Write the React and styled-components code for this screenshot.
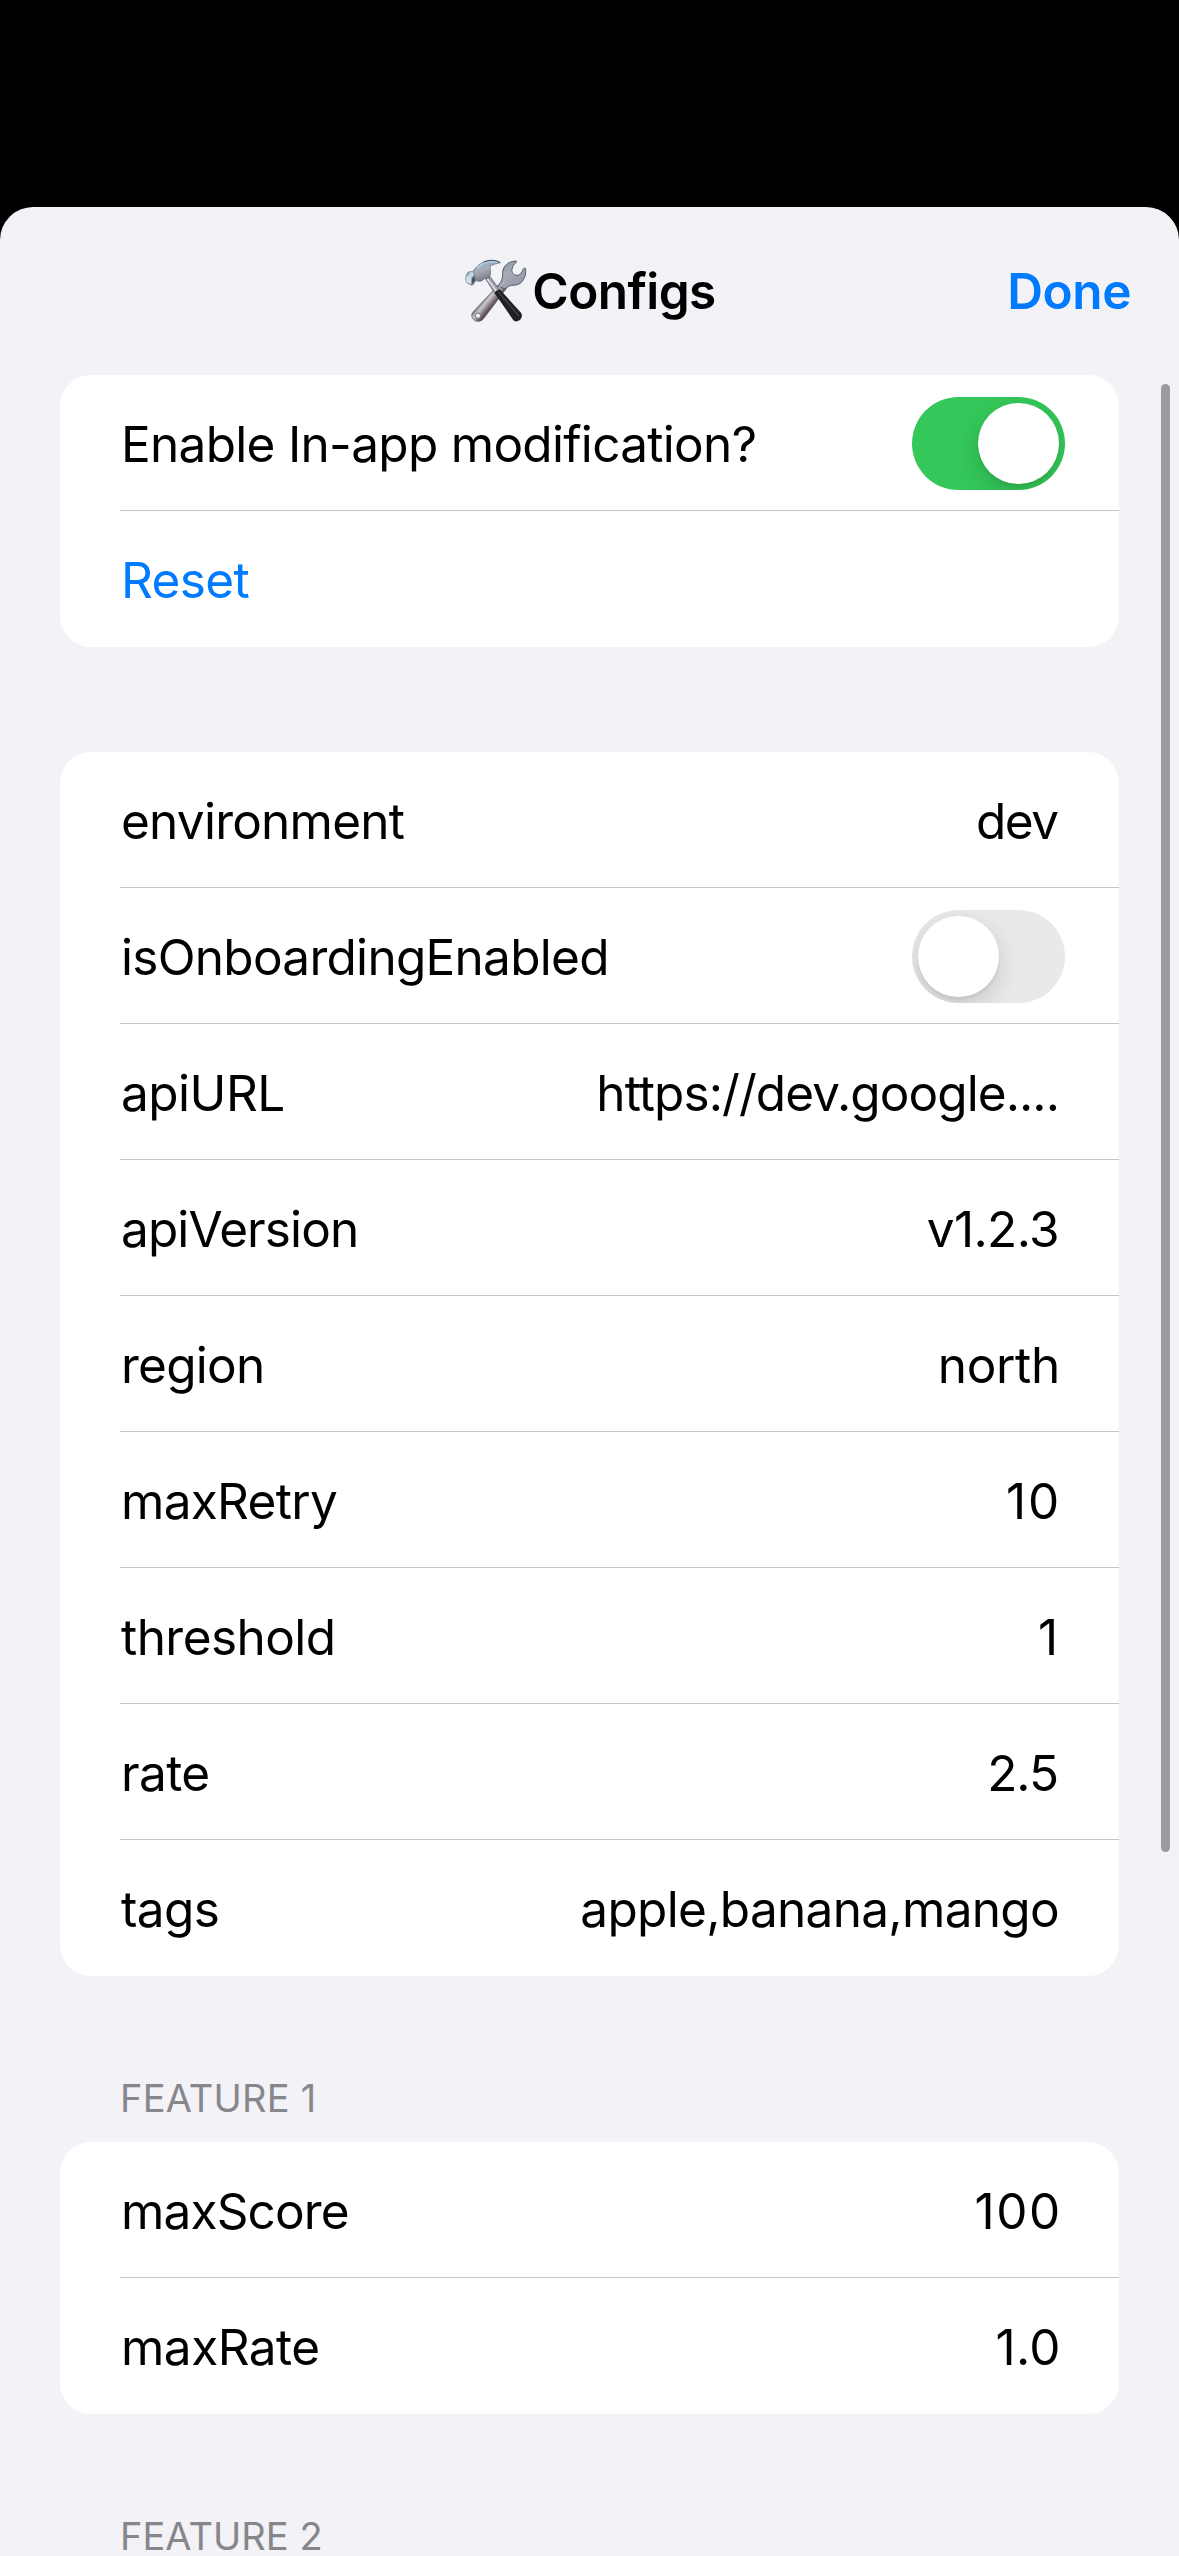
import React, { useState } from "react";
import styled, { createGlobalStyle } from "styled-components";

const GlobalStyle = createGlobalStyle`
  body {
    margin: 0;
    background: #000;
    overflow: hidden;
  }
`;

const Screen = styled.div`
  box-sizing: border-box;
  width: 1179px;
  height: 2556px;
  padding-top: 207px;
  overflow: hidden;
  background: #000;
  color: #000;
  font-family: Inter, "Liberation Sans", sans-serif;
  font-size: 49.5px;
  line-height: 60px;
  letter-spacing: -0.65px;
`;

const Sheet = styled.main`
  position: relative;
  display: flex;
  flex-direction: column;
  height: 2349px;
  overflow: hidden;
  border-radius: 33px 33px 0 0;
  background: #f2f2f7;
`;

const NavBar = styled.header`
  display: grid;
  grid-template-columns: 1fr auto 1fr;
  align-items: center;
  flex: none;
  height: 168px;
  padding: 0 48px;
`;

const Title = styled.h1`
  grid-column: 2;
  display: flex;
  align-items: center;
  margin: 0;
  font-size: inherit;
  font-weight: 600;
  letter-spacing: -0.6px;
`;

const ToolsArt = styled.svg`
  width: 69px;
  height: 64px;
  margin-bottom: 2px;
`;

const PlainButton = styled.button`
  padding: 0;
  border: 0;
  background: none;
  color: #007aff;
  font: inherit;
  letter-spacing: ${(p) => p.$track ?? -0.65}px;
`;

const DoneButton = styled(PlainButton)`
  justify-self: end;
  font-weight: 600;
`;

const Section = styled.section`
  flex: none;
  padding: 0 60px;
`;

const Gap = styled.div`
  flex: none;
  height: 105px;
`;

const SectionTitle = styled.h2`
  box-sizing: border-box;
  display: flex;
  align-items: flex-end;
  height: 166px;
  margin: 0;
  padding: 0 60px 27px;
  color: #86868b;
  font-size: 38px;
  font-weight: 400;
  line-height: 34px;
  letter-spacing: ${(p) => p.$track}px;
`;

const Card = styled.div`
  overflow: hidden;
  border-radius: 31px;
  background: #fff;
`;

const Row = styled.div`
  box-sizing: border-box;
  display: flex;
  align-items: center;
  justify-content: space-between;
  height: 136px;
  margin-left: 60px;
  padding: 2px 60px 0 1px;
  border-bottom: 1px solid #c6c6c8;
  white-space: nowrap;

  &:last-child {
    border-bottom-color: transparent;
  }
`;

const Label = styled.span`
  letter-spacing: ${(p) => p.$track ?? -0.65}px;
`;

const Value = styled(Label)`
  margin-right: ${(p) => p.$inset ?? 0}px;
`;

const Switch = styled.button`
  box-sizing: border-box;
  display: flex;
  justify-content: ${(p) => (p.$on ? "flex-end" : "flex-start")};
  width: 153px;
  height: 93px;
  margin-right: -6px;
  padding: 6px;
  overflow: hidden;
  border: 0;
  border-radius: 47px;
  background: ${(p) => (p.$on ? "#34c759" : "#e9e9eb")};
`;

const Knob = styled.span`
  width: 81px;
  height: 81px;
  border-radius: 50%;
  background: #fff;
  box-shadow: 0 9px 24px rgba(0, 0, 0, 0.15), 0 3px 3px rgba(0, 0, 0, 0.05);
`;

const ScrollThumb = styled.div`
  position: absolute;
  top: 177px;
  right: 9px;
  width: 9px;
  height: 1468px;
  border-radius: 5px;
  background: #9c9ba1;
`;

function Tools() {
  return (
    <ToolsArt viewBox="12 24 207 192" aria-hidden="true">
      <defs>
        <linearGradient id="steel" x1="0" y1="0" x2="0.4" y2="1">
          <stop offset="0" stopColor="#93a9c0" />
          <stop offset="0.5" stopColor="#a9adb8" />
          <stop offset="1" stopColor="#747680" />
        </linearGradient>
        <linearGradient id="jaw" x1="0" y1="0" x2="0.7" y2="1">
          <stop offset="0" stopColor="#7e93a6" />
          <stop offset="0.45" stopColor="#a7abb7" />
          <stop offset="1" stopColor="#9497a3" />
        </linearGradient>
        <linearGradient id="handle" gradientUnits="userSpaceOnUse" x1="78" y1="146" x2="101" y2="165">
          <stop offset="0" stopColor="#7c7b86" />
          <stop offset="0.28" stopColor="#c9cbd2" />
          <stop offset="0.62" stopColor="#9f8e96" />
          <stop offset="1" stopColor="#584f59" />
        </linearGradient>
        <linearGradient id="face" x1="0" y1="0" x2="1" y2="1">
          <stop offset="0" stopColor="#5f7990" />
          <stop offset="0.4" stopColor="#c9e2ee" />
          <stop offset="1" stopColor="#59616c" />
        </linearGradient>
      </defs>
      <path
        d="M117 106 L41 187 C34 197 40 212 54 214 C65 215 71 210 76 203 L145 112 Z"
        fill="url(#handle)"
        stroke="#6b646e"
        strokeWidth="2"
      />
      <circle cx="57" cy="197" r="8" fill="#f2f2f7" stroke="#77727b" strokeWidth="3" />
      <path
        d="M169 33 C148 35 132 48 131 67 C131 82 130 94 116 108 L139 117 C147 105 158 107 171 105 C190 102 202 82 200 57 C200 52 194 54 192 58 C188 68 184 75 175 76 C164 77 157 67 159 57 C161 48 165 42 171 38 C175 35 173 33 169 33 Z"
        fill="url(#jaw)"
        stroke="#52606d"
        strokeWidth="3"
        strokeLinejoin="round"
      />
      <path d="M138 92 L87 153" stroke="#c3bfc7" strokeWidth="4" opacity="0.7" />
      <path d="M77 82 L92 78 L124 122 L109 133 Z" fill="#9a9da7" stroke="#555861" strokeWidth="2" />
      <path d="M85 86 L113 124" stroke="#dde1e7" strokeWidth="5" />
      <path
        d="M107 130 C110 122 117 117 124 120 L186 188 C193 198 186 212 174 214 C168 215 164 212 160 206 Z"
        fill="#202124"
      />
      <path d="M119 127 L178 196" stroke="#44464a" strokeWidth="4" strokeLinecap="round" />
      <path
        d="M42 64 C51 50 61 42 74 36 C90 29 109 29 124 38 C112 41 98 44 93 50 C94 60 97 72 91 82 C85 88 77 82 73 89 C66 96 53 95 43 88 Z"
        fill="url(#steel)"
        stroke="#59636e"
        strokeWidth="2"
        strokeLinejoin="round"
      />
      <path d="M55 54 C71 37 95 32 115 37" fill="none" stroke="#a9cced" strokeWidth="5" strokeLinecap="round" />
      <path d="M75 36 C91 29 108 29 122 37" fill="none" stroke="#35404b" strokeWidth="2.5" strokeLinecap="round" />
      <path
        d="M27 67 C33 63 40 64 45 68 L49 91 C48 99 43 105 37 106 L22 97 C18 87 21 73 27 67 Z"
        fill="url(#face)"
        stroke="#667583"
        strokeWidth="2"
      />
      <path d="M23 79 L38 85 L37 103 L22 95 Z" fill="#d3e0e9" />
      <path d="M38 85 L46 77 L48 92 L38 104 Z" fill="#47515c" />
    </ToolsArt>
  );
}

const CONFIGS = [
  { key: "environment", track: -0.76, value: "dev", valueTrack: -1.5, inset: 1.5 },
  { key: "isOnboardingEnabled", track: -0.72, toggle: true },
  { key: "apiURL", track: -0.5, value: "https://dev.google....", valueTrack: -0.92 },
  { key: "apiVersion", track: -0.9, value: "v1.2.3", valueTrack: -0.6 },
  { key: "region", track: -0.75, value: "north", valueTrack: -0.3, inset: -1 },
  { key: "maxRetry", track: -0.69, value: "10", valueTrack: 2, inset: -2.3 },
  { key: "threshold", track: -0.55, value: "1", inset: 1.5 },
  { key: "rate", track: -0.6, value: "2.5", valueTrack: -1, inset: 1 },
  { key: "tags", track: -0.6, value: "apple,banana,mango", valueTrack: -0.68 },
];

const FEATURE_ONE = [
  { key: "maxScore", track: -0.85, value: "100", valueTrack: 1.6, inset: -2.8 },
  { key: "maxRate", track: -0.5, value: "1.0", valueTrack: 0.3, inset: -1.8 },
];

function Toggle({ initial, label }) {
  const [on, setOn] = useState(initial);
  return (
    <Switch $on={on} role="switch" aria-checked={on} aria-label={label} onClick={() => setOn(!on)}>
      <Knob />
    </Switch>
  );
}

function ConfigCard({ items }) {
  return (
    <Card>
      {items.map((item) => (
        <Row key={item.key}>
          <Label $track={item.track}>{item.key}</Label>
          {item.toggle ? (
            <Toggle initial={false} label={item.key} />
          ) : (
            <Value $track={item.valueTrack} $inset={item.inset}>
              {item.value}
            </Value>
          )}
        </Row>
      ))}
    </Card>
  );
}

export default function App() {
  return (
    <>
      <GlobalStyle />
      <Screen>
        <Sheet>
          <NavBar>
            <Title>
              <Tools />
              Configs
            </Title>
            <DoneButton $track={-0.4}>Done</DoneButton>
          </NavBar>
          <Section>
            <Card>
              <Row>
                <Label $track={-0.7}>Enable In-app modification?</Label>
                <Toggle initial label="Enable In-app modification?" />
              </Row>
              <Row>
                <PlainButton>Reset</PlainButton>
              </Row>
            </Card>
          </Section>
          <Gap />
          <Section>
            <ConfigCard items={CONFIGS} />
          </Section>
          <Section>
            <SectionTitle $track={0.2}>FEATURE 1</SectionTitle>
            <ConfigCard items={FEATURE_ONE} />
          </Section>
          <Section>
            <SectionTitle $track={0.05}>FEATURE 2</SectionTitle>
          </Section>
          <ScrollThumb />
        </Sheet>
      </Screen>
    </>
  );
}
